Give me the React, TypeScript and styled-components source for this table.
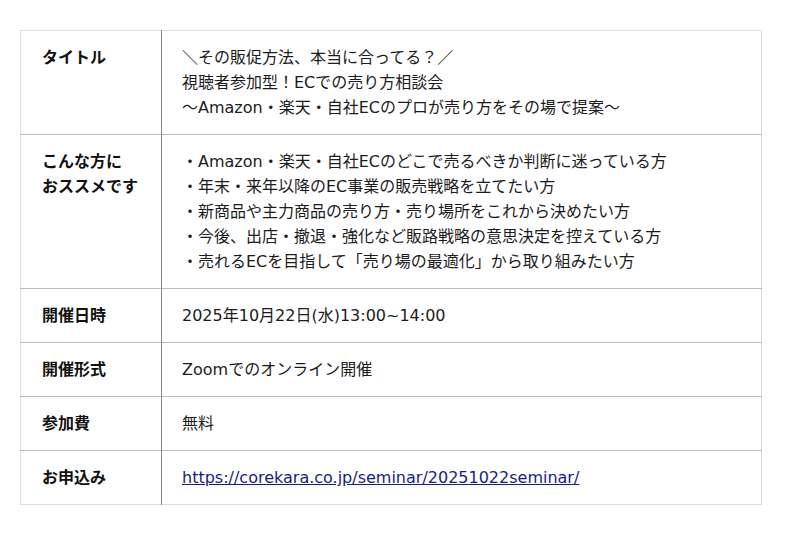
import React from 'react'
import styled, { createGlobalStyle } from 'styled-components'

const GlobalStyle = createGlobalStyle`
  html, body {
    margin: 0;
    padding: 0;
    background: #ffffff;
  }
  body {
    font-family: 'DejaVu Sans', 'Noto Sans CJK JP', sans-serif;
    color: #222222;
  }
`

const Page = styled.div`
  padding: 30px 20px;
`

const Table = styled.table`
  width: 742px;
  border-collapse: collapse;
  border: 1px solid #dddddd;
  font-size: 16px;
  line-height: 25px;
`

const Row = styled.tr`
  border-top: 1px solid #bbbbbb;

  &:first-child {
    border-top: none;
  }
`

const Label = styled.th`
  width: 99px;
  padding: 14px 20px 14px 21px;
  text-align: left;
  vertical-align: top;
  font-size: 16px;
  font-weight: 700;
  color: #111111;
  border-right: 1px solid #888888;
`

const Value = styled.td`
  padding: 14px 20px;
  vertical-align: top;
  color: #1c1c1c;
`

const Line = styled.div``

const Link = styled.a`
  color: #1a1a8c;
  text-decoration: underline;
`

const rows: { label: string[]; value: React.ReactNode[] }[] = [
  {
    label: ['タイトル'],
    value: [
      '＼その販促方法、本当に合ってる？／',
      '視聴者参加型！ECでの売り方相談会',
      '〜Amazon・楽天・自社ECのプロが売り方をその場で提案〜',
    ],
  },
  {
    label: ['こんな方に', 'おススメです'],
    value: [
      '・Amazon・楽天・自社ECのどこで売るべきか判断に迷っている方',
      '・年末・来年以降のEC事業の販売戦略を立てたい方',
      '・新商品や主力商品の売り方・売り場所をこれから決めたい方',
      '・今後、出店・撤退・強化など販路戦略の意思決定を控えている方',
      '・売れるECを目指して「売り場の最適化」から取り組みたい方',
    ],
  },
  { label: ['開催日時'], value: ['2025年10月22日(水)13:00~14:00'] },
  { label: ['開催形式'], value: ['Zoomでのオンライン開催'] },
  { label: ['参加費'], value: ['無料'] },
  {
    label: ['お申込み'],
    value: [
      <Link href="#" key="l">
        https://corekara.co.jp/seminar/20251022seminar/
      </Link>,
    ],
  },
]

export default function App() {
  return (
    <Page>
      <GlobalStyle />
      <Table>
        <tbody>
          {rows.map((r, i) => (
            <Row key={i}>
              <Label>
                {r.label.map((l, j) => (
                  <Line key={j}>{l}</Line>
                ))}
              </Label>
              <Value>
                {r.value.map((v, j) => (
                  <Line key={j}>{v}</Line>
                ))}
              </Value>
            </Row>
          ))}
        </tbody>
      </Table>
    </Page>
  )
}
